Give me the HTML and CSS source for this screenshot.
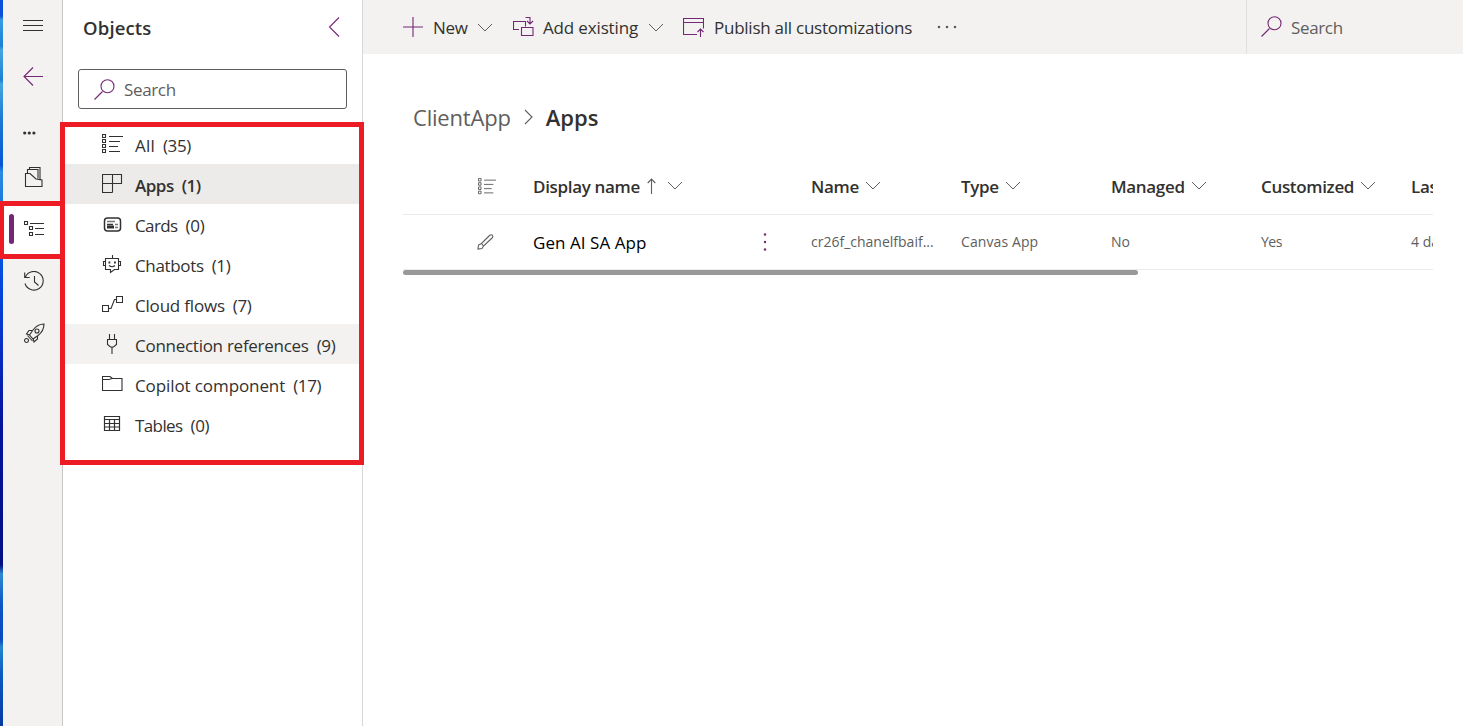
FILE: index.html
```html
<!DOCTYPE html>
<html lang="en">
<head>
<meta charset="utf-8">
<title>ClientApp - Apps</title>
<link rel="stylesheet" href="styles.css">
</head>
<body>
<svg class="defs" width="0" height="0">
  <symbol id="chev" viewBox="0 0 16 9"><path d="M1 1l7 7 7-7"/></symbol>
  <symbol id="list" viewBox="0 0 21 20"><path d="M.5.5h3v3h-3zM.5 5.500h3v3h-3zM.5 10.500h3v3h-3zM.5 15.500h3v3h-3zM7 2.500h14M7 7.500h11M7 12.500h9M7 17.500h11"/></symbol>
  <symbol id="search" viewBox="0 0 21 21"><path d="M.5 20.500l8-8"/><circle cx="13.500" cy="7.300" r="6.500"/></symbol>
</svg>
<div class="app">
  <div class="desktop"></div>
  <nav class="rail">
    <div class="rail-item r1"><svg width="20" height="13"><path d="M0 1.500h20M0 6.500h20M0 11.500h20"/></svg></div>
    <div class="rail-item r2"><svg class="purple" width="21" height="19"><path d="M20 9.500H1M10 .5l-9 9 9 9"/></svg></div>
    <div class="rail-item r3"><svg class="solid" width="13" height="4"><circle cx="1.700" cy="2" r="1.600"/><circle cx="6.300" cy="2" r="1.600"/><circle cx="10.900" cy="2" r="1.600"/></svg></div>
    <div class="rail-item r4"><svg width="20" height="22"><path d="M1.500 7.500v13h16.500v-6.500l-6-1-6-5.500zM3.500 7V3.500h10.500v9M5.500 3.500V1.500h10.500V14"/></svg></div>
    <div class="rail-item r5"><span class="mark"></span><svg width="20" height="16"><path d="M.5.5h3v3h-3zM5.500 5.500h3v3h-3zM5.500 11.500h3v3h-3zM6 2.500h14M11 7.500h9M11 13.500h9"/></svg></div>
    <div class="rail-item r6"><svg width="21" height="21"><path d="M1.300 6.200A9.300 9.300 0 1 1 1 12.500M.700 1.500v5h5M10.500 5v6l4 3.500"/></svg></div>
    <div class="rail-item r7"><svg width="21" height="21"><path d="M20 1c-4 0-8 2-11 6l-3.500 5 3.500 4 5-3.500c4-3 6-7 6-11.500zM8 7.500H5L2.500 11 5.500 12M13.500 13v3L10 19l-1-3.500M3.500 12.500l5 5.500M2.500 15.500a2 2 0 1 0 .1 4 2 2 0 1 0-.1-4"/><circle cx="13" cy="8" r="2"/></svg></div>
  </nav>
  <aside class="panel">
    <header class="panel-head"><h2 class="panel-title">Objects</h2><svg class="purple" width="12" height="20"><path d="M11 .5L1.500 10l9.500 9.500"/></svg></header>
    <div class="search-box"><svg class="purple" width="21" height="21"><use href="#search"/></svg><span class="t-search">Search</span></div>
    <ul class="objects">
      <li><svg width="21" height="20"><use href="#list"/></svg><span class="o1">All</span><span>(35)</span></li>
      <li class="selected"><svg width="21" height="20"><path d="M.5.5h19v9h-19zM10.500 .5v18M.5 9.500v9h10M19.500 0v9.500"/></svg><span>Apps</span><span>(1)</span></li>
      <li><svg width="21" height="20"><rect x="2.500" y="4" width="16" height="13" rx="3" stroke-width="1.500"/><path stroke="#777" stroke-width="1.500" d="M5 7.500h8M13 10.500h3M13 13.500h3"/><path stroke-width="1.500" d="M5 10.500h6"/><path stroke-width="3" d="M5 13h7"/></svg><span class="o3">Cards</span><span>(0)</span></li>
      <li><svg width="21" height="20"><path d="M3.500 4.500h13v11h-4l-4 3v-3h-5zM10.500 4.500V1M3.500 7.500H1.500v4h2M16.500 7.500h2v4h-2M7 11.500q3 2.500 6 0"/><path stroke-width="1.800" d="M6.500 8.500h1.800M12 8.500h1.800"/></svg><span>Chatbots</span><span>(1)</span></li>
      <li><svg width="21" height="20"><path d="M.5 11.500h6v6h-6zM14.500 2.500h6v6h-6zM7 14.500h2l3.500-9h2"/></svg><span class="o5">Cloud flows</span><span>(7)</span></li>
      <li class="hover"><svg width="21" height="20"><path d="M7.500 0v5.500M12.500 0v5.500M5 5.500h10M5.500 5.500v5l3 2.500h3l3-2.500v-5M10 13v7"/></svg><span class="o6">Connection references</span><span>(9)</span></li>
      <li><svg width="21" height="20"><path d="M.5 16.500v-14h7.500l2.500 2h9.500v12zM.5 5.500h6.500l3-1"/></svg><span class="o7">Copilot component</span><span>(17)</span></li>
      <li><svg width="21" height="20"><path stroke-width="1.200" d="M2.500 2.500h15v14h-15zM2.500 5.500h15M2.500 9.500h15M2.500 13h15M7.500 5.500v11M12.500 5.500v11"/></svg><span class="o8">Tables</span><span>(0)</span></li>
    </ul>
  </aside>
  <main class="main">
    <div class="commands">
      <button class="cmd c1"><svg class="purple" width="20" height="20"><path d="M0 10h20M10 0v20"/></svg><span>New</span><svg class="chev" width="16" height="9"><use href="#chev"/></svg></button>
      <button class="cmd c2"><svg class="purple" width="21" height="20"><path d="M6 12.500H.5v-8h12v5M8.500 10.500h11.500v8H8.500zM12.500 .5h4.500v6M14 4l3 3 3-3"/></svg><span>Add existing</span><svg class="chev" width="16" height="9"><use href="#chev"/></svg></button>
      <button class="cmd c3"><svg class="purple" width="21" height="20"><path d="M14 17.500H.5v-16h20v10M.5 5.500h20M17.500 20v-8M14.500 15l3-3 3 3"/></svg><span>Publish all customizations</span></button>
      <button class="cmd c4"><svg class="solid gray" width="20" height="4"><circle cx="2" cy="2" r="1.300"/><circle cx="10" cy="2" r="1.300"/><circle cx="18" cy="2" r="1.300"/></svg></button>
      <div class="find"><svg class="purple" width="21" height="21"><use href="#search"/></svg><span class="t-search">Search</span></div>
    </div>
    <div class="crumbs"><span class="crumb">ClientApp</span><svg class="gray" width="9" height="16"><path d="M1 1l7 7-7 7"/></svg><strong class="here">Apps</strong></div>
    <section class="grid">
      <div class="row head">
        <svg class="gray" width="18" height="17"><use href="#list"/></svg>
        <div class="cell"><span>Display name</span><svg class="gray up" width="9" height="16"><path d="M4.500 16V1M.7 5l3.800-4 3.800 4"/></svg><svg class="chev" width="16" height="9"><use href="#chev"/></svg></div>
        <span></span>
        <div class="cell"><span>Name</span><svg class="chev" width="16" height="9"><use href="#chev"/></svg></div>
        <div class="cell"><span>Type</span><svg class="chev" width="16" height="9"><use href="#chev"/></svg></div>
        <div class="cell"><span>Managed</span><svg class="chev" width="16" height="9"><use href="#chev"/></svg></div>
        <div class="cell"><span>Customized</span><svg class="chev" width="16" height="9"><use href="#chev"/></svg></div>
        <div class="cell last"><span>Las</span></div>
      </div>
      <div class="row item">
        <svg class="gray" width="17" height="16"><path d="M1 15l.5-4 3-1.500L12.500 1.500q2-1.500 3 0 .8 1.200-.5 2.500L6.500 12 5 14.500zM4.500 9.500l2 2.500"/></svg>
        <span class="name">Gen AI SA App</span>
        <svg class="solid purple kebab" width="4" height="20"><circle cx="2" cy="2.500" r="1.200"/><circle cx="2" cy="10" r="1.200"/><circle cx="2" cy="17.500" r="1.200"/></svg>
        <span>cr26f_chanelfbaif...</span>
        <span class="v2">Canvas App</span>
        <span>No</span>
        <span class="v4">Yes</span>
        <span class="last">4 da</span>
      </div>
      <div class="scroll"></div>
    </section>
  </main>
</div>
<div class="outline outline-rail"></div>
<div class="outline outline-list"></div>
</body>
</html>
```
FILE: styles.css
```css
* { box-sizing: border-box; }
body { margin: 0; background: #fff; overflow: hidden; color: #323130; font: 17px/24px "Open Sans", "Noto Sans", sans-serif; }
svg { display: block; flex: none; fill: none; stroke: #323130; stroke-width: 1.1; }
.defs { position: absolute; }
.solid { fill: #323130; stroke: none; }
.gray { stroke: #605e5c; }
.solid.gray { fill: #605e5c; stroke: none; }
.purple { stroke: #742774; }
.solid.purple { fill: #742774; stroke: none; }
.chev { stroke: #605e5c; stroke-width: 1; }
span, strong, h2 { white-space: nowrap; }
.app { display: flex; width: 1463px; height: 726px; }
.desktop { width: 3px; flex: none; background: linear-gradient(#0b50d8 0, #0b50d8 16px, #3a9be4 20px, #1c80d4 46px, #45a5e0 50px, #1c80d4 80px, #45a5e0 84px, #1b79d2 120px, #0755d6 165px, #2a8de0 172px, #0b5ee0 240px, #0649df 280px, #0736cc 330px, #05149c 420px, #030f83 565px, #2e8bcf 574px, #0d55c5 605px, #0b49bf 640px, #2487cd 647px, #0b59c3 675px, #0739a0 726px); }
.rail { width: 60px; flex: none; background: #f3f2f1; border-right: 1px solid #c8c6c4; display: flex; flex-direction: column; }
.rail-item { display: flex; align-items: center; padding-left: 21px; flex: none; }
.r1 { height: 50px; padding-left: 20px; }
.r2 { height: 52px; padding-left: 20px; }
.r2 svg { margin-top: 1px; }
.r3 { height: 61px; padding-left: 20px; }
.r4 { height: 27px; }
.r5 { height: 65px; margin-top: 12px; margin-right: -1px; padding-left: 6px; background: linear-gradient(#f3f2f1 2px, #fff 2px, #fff 54px, #f3f2f1 54px); align-items: flex-start; }
.r5 svg { margin: 19px 0 0 10px; }
.mark { width: 5px; height: 30px; margin-top: 12px; border-radius: 3px; background: #742774; }
.r6 { height: 28px; }
.r7 { height: 76px; }
.panel { width: 300px; flex: none; border-right: 1px solid #d9d7d5; display: flex; flex-direction: column; }
.panel-head { height: 55px; display: flex; align-items: center; justify-content: space-between; padding: 0 22px 1px 20px; }
.panel-title { margin: 2px 0 0; font-size: 18.5px; font-weight: 600; letter-spacing: .15px; }
.search-box { margin: 14px 15px; height: 40px; border: 1px solid #605e5c; border-radius: 3px; display: flex; align-items: center; gap: 9px; padding-left: 15px; color: #605e5c; }
.t-search { letter-spacing: -.35px; padding-top: 2px; }
.objects { list-style: none; margin: 1px 0 0; padding: 0; }
.objects li { height: 40px; display: flex; align-items: center; gap: 8px; padding: 2px 0 0 39px; letter-spacing: -.35px; }
.objects span { padding-top: 1px; }
.objects svg { margin: -2px 4px 0 0; }
.objects .o1 { letter-spacing: .2px; }
.objects .selected { background: #edebe9; font-weight: 600; letter-spacing: -.5px; }
.objects .hover { background: #f3f2f1; }
.objects .o3, .objects .o8 { letter-spacing: -.6px; }
.objects .o5 { letter-spacing: -.2px; }
.objects .o6 { letter-spacing: -.27px; }
.objects .o7 { letter-spacing: -.1px; }
.main { width: 1100px; flex: none; }
.commands { display: flex; height: 54px; background: #f3f2f1; padding-left: 40px; }
.cmd { display: flex; align-items: center; padding: 0; border: 0; background: none; font: inherit; color: inherit; letter-spacing: -.25px; }
.cmd span { margin-left: 10px; padding-top: 1px; }
.cmd .chev { margin-left: 9px; }
.c1 { width: 110px; }
.c2 { width: 170px; }
.c2 span { margin-left: 9px; letter-spacing: -.15px; }
.c2 .chev { margin-left: 10px; }
.c3 { width: 254px; }
.find { width: 217px; margin-left: auto; border-left: 1px solid #e1dfdd; display: flex; align-items: center; gap: 9px; padding-left: 14px; color: #605e5c; }
.find svg { margin-top: -2px; }
.crumbs { height: 104px; display: flex; align-items: center; padding: 22px 0 0 50px; font-size: 22px; }
.crumb { color: #605e5c; letter-spacing: -.2px; }
.crumbs svg { margin: 0 13px; }
.here { font-weight: 600; }
.grid { width: 1030px; margin-left: 40px; overflow: hidden; }
.row { display: grid; grid-template-columns: 130px 230px 48px 150px 150px 150px 150px 22px; align-items: center; border-bottom: 1px solid #edebe9; width: 1030px; }
.row > svg:first-child { margin-left: 75px; }
.head { height: 57px; font-weight: 600; font-size: 17px; letter-spacing: -.33px; }
.cell { display: flex; align-items: center; }
.cell span { padding-top: 1px; }
.cell .chev { margin: -2px 0 0 6px; }
.cell .up { margin-left: 7px; }
.cell .up + .chev { margin-left: 11px; }
.last { overflow: hidden; width: 22px; }
.item { height: 55px; font-size: 14px; color: #605e5c; }
.item > svg:first-child { margin-left: 74px; }
.name { color: #000; font-size: 17px; padding-top: 1px; letter-spacing: .05px; }
.v2 { letter-spacing: .1px; }
.v4 { letter-spacing: -.5px; }
.scroll { width: 735px; height: 5px; border-radius: 3px; background: #999; }
.outline { position: absolute; border: 5px solid #ed1c24; }
.outline-rail { left: -1px; top: 201px; width: 66px; height: 58px; }
.outline-list { left: 60px; top: 122px; width: 304px; height: 343px; }
```
